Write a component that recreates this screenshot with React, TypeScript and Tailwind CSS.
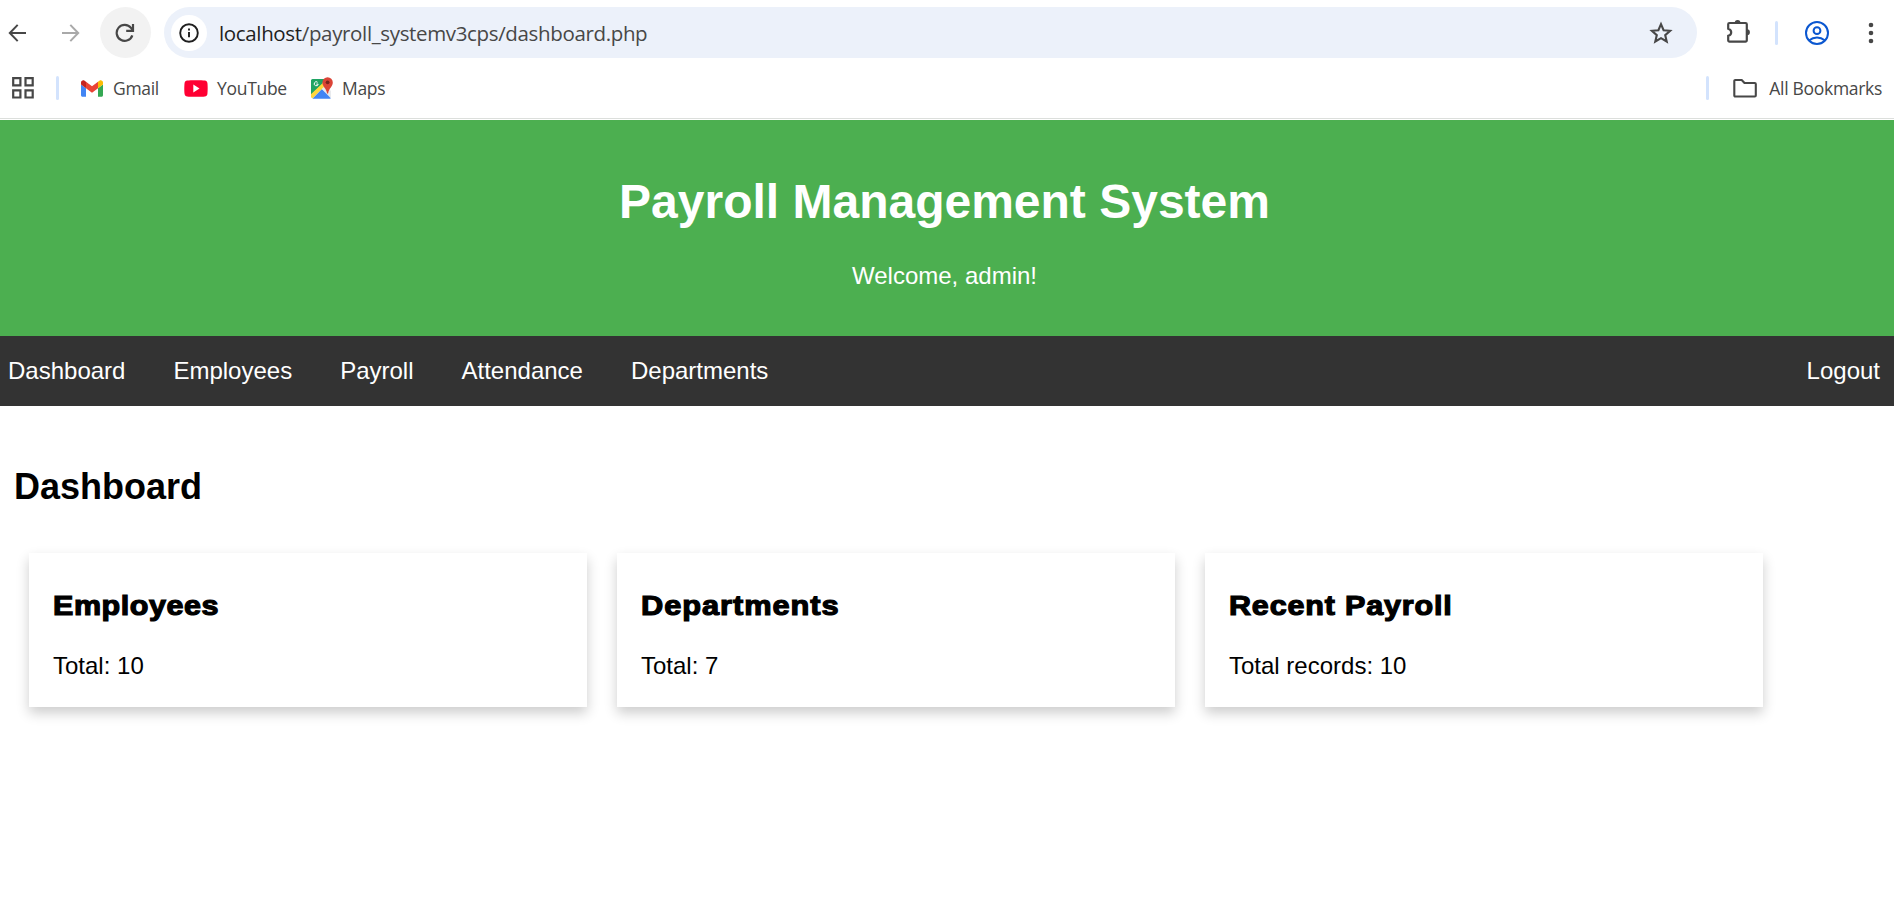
import React from "react";

const navLinks = ["Dashboard", "Employees", "Payroll", "Attendance", "Departments"];

const cards = [
  { title: "Employees", text: "Total: 10", stretch: "scale-x-[1.09] tracking-[0.5px]" },
  { title: "Departments", text: "Total: 7", stretch: "scale-x-[1.1] tracking-[0.85px]" },
  { title: "Recent Payroll", text: "Total records: 10", stretch: "scale-x-[1.09] tracking-[0.75px]" },
];

function Arrow({ className }: { className: string }) {
  return (
    <svg viewBox="0 0 18 18" className={"size-[18px] shrink-0 " + className} fill="none" stroke="currentColor" strokeWidth="2">
      <path d="M18 9H2.200M9.700 0.900 1.800 9l7.900 8.100" />
    </svg>
  );
}

function Reload() {
  return (
    <svg viewBox="0 0 20 20" className="size-5 text-[#474747]" fill="none" stroke="currentColor" strokeWidth="2.2">
      <path d="M17.3 12.3A8 8 0 1 1 16 4.9L17.6 7" />
      <path d="M18 1v6.8h-6.8" />
    </svg>
  );
}

function Info() {
  return (
    <svg viewBox="0 0 20 20" className="size-5 text-[#1f1f1f]" fill="none" stroke="currentColor" strokeWidth="1.9">
      <circle cx="10" cy="10" r="8.8" />
      <path d="M10 9v5.2M10 5.5v2" />
    </svg>
  );
}

function Star() {
  return (
    <svg viewBox="0 0 24 24" className="size-6 text-[#474747]" fill="none" stroke="currentColor" strokeWidth="2.1" strokeLinejoin="miter">
      <path d="M12 3.2l2.600 6 6.500.6-4.900 4.300 1.500 6.400-5.700-3.400-5.700 3.400 1.500-6.400L2.900 9.800l6.500-.6z" />
    </svg>
  );
}

function Puzzle() {
  return (
    <svg viewBox="0 0 26 26" className="h-[26px] w-[26px] text-[#474747]">
      <path
        d="M4.500 5h16a1.300 1.300 0 0 1 1.300 1.300v16a1.300 1.300 0 0 1-1.300 1.300h-16a1.300 1.300 0 0 1-1.300-1.300v-4.400c2-.5 3-1.800 3-3.600s-1-3.100-3-3.600V6.300A1.300 1.300 0 0 1 4.500 5z"
        fill="none"
        stroke="currentColor"
        strokeWidth="2.200"
      />
      <path d="M9.700 4.800a2.900 2.900 0 0 1 5.800 0zM22 11.300a2.900 2.900 0 0 1 0 5.800z" fill="currentColor" />
    </svg>
  );
}

function Profile() {
  return (
    <svg viewBox="0 0 24 24" className="size-6 text-[#0b57d0]" fill="none" stroke="currentColor" strokeWidth="2">
      <circle cx="12" cy="12" r="11" />
      <circle cx="12" cy="9.700" r="3.400" />
      <path d="M4.300 19.300c2.200-1.900 4.800-2.900 7.700-2.900s5.500 1 7.700 2.900" />
    </svg>
  );
}

function Dots() {
  return (
    <svg viewBox="0 0 6 22" className="h-[22px] w-1.5 text-[#474747]" fill="currentColor">
      <circle cx="3" cy="3" r="2.300" />
      <circle cx="3" cy="11" r="2.300" />
      <circle cx="3" cy="19" r="2.300" />
    </svg>
  );
}

function Apps() {
  return (
    <svg viewBox="0 0 22 22" className="size-[22px] text-[#474747]" fill="none" stroke="currentColor" strokeWidth="2.200">
      <path d="M1.200 1.200h7.200v7.200H1.200zM13.500 1.200h7.200v7.200h-7.200zM1.200 13.300h7.200v7.200H1.200zM13.500 13.300h7.200v7.200h-7.200z" />
    </svg>
  );
}

function Gmail() {
  return (
    <svg viewBox="52 42 88 66" className="h-[17px] w-[22px]">
      <path fill="#4285f4" d="M58 108h14V74L52 59v43c0 3.320 2.690 6 6 6" />
      <path fill="#34a853" d="M120 108h14c3.320 0 6-2.690 6-6V59l-20 15" />
      <path fill="#fbbc04" d="M120 48v26l20-15v-8c0-7.420-8.470-11.650-14.400-7.200" />
      <path fill="#ea4335" d="M72 74V48l24 18 24-18v26L96 92" />
      <path fill="#c5221f" d="M52 51v8l20 15V48l-5.600-4.200c-5.940-4.450-14.400-.22-14.400 7.200" />
    </svg>
  );
}

function YouTube() {
  return (
    <svg viewBox="0 0 24 17" className="h-[17px] w-6">
      <path fill="#ff0033" d="M3.200.5C6 .1 18 .1 20.800.5 22.300.7 23.200 1.700 23.400 3c.4 2.500.4 8.500 0 11-.2 1.300-1.100 2.300-2.600 2.500-2.800.4-14.800.4-17.600 0C1.700 16.300.8 15.300.6 14 .2 11.500.2 5.500.6 3 .8 1.700 1.700.7 3.200.5z" />
      <path fill="#fff" d="M9.300 4.500v8l6.200-4z" />
    </svg>
  );
}

function Maps() {
  return (
    <svg viewBox="0 0 22 22" className="size-[22px]">
      <path fill="#1fa463" d="M1.500 2H15v5L1.200 20.500a1.500 1.500 0 0 1-1.200-1.500V3.500A1.500 1.500 0 0 1 1.500 2z" />
      <path fill="#e8eaed" d="M11 11.200 14.500 8l5.500 6v6L19 21.500z" />
      <path fill="#4285f4" d="M1.500 21.500 10.800 12l9 9.300-.8.400H2z" />
      <path fill="#ffd73e" d="M0 16.800 12.500 4.500l2.700 3L1.700 21.300C.7 21.200 0 20.300 0 19.300z" />
      <path fill="#1fa463" d="M0 3.500h11.500v2.800L0 17z" />
      <path d="M6.600 5.300a2 2 0 1 0 .6 1.800H5.300" fill="none" stroke="#fff" strokeWidth="1" />
      <path fill="#db4437" d="M16.600.3a5.200 5.200 0 0 0-5.200 5.200c0 4.300 4.100 5.700 4.700 11.100h1c.6-5.400 4.700-6.800 4.700-11.100A5.200 5.200 0 0 0 16.600.3z" />
      <circle cx="16.600" cy="5.300" r="1.900" fill="#7b231d" />
    </svg>
  );
}

function Folder() {
  return (
    <svg viewBox="0 0 24 20" className="h-5 w-6 text-[#474747]" fill="none" stroke="currentColor" strokeWidth="2.100" strokeLinejoin="round">
      <path d="M1.300 17.500V3q0-1 1-1h6.400l2.800 3h10.300q1 0 1 1v11.500q0 1-1 1H2.300q-1 0-1-1z" />
    </svg>
  );
}

function Divider({ className }: { className: string }) {
  return <div className={"h-6 w-[3px] shrink-0 rounded-sm bg-[#d3e3fd] " + className} />;
}

function Toolbar() {
  return (
    <div className="flex h-[65px] items-center pl-2">
      <Arrow className="text-[#474747]" />
      <Arrow className="ml-9 rotate-180 text-[#a9a9a9]" />
      <div className="ml-5 flex size-[51px] shrink-0 items-center justify-center rounded-full bg-[#f2f2f2] pr-px">
        <Reload />
      </div>
      <div className="ml-[13px] flex h-[51px] w-[1533px] shrink-0 items-center rounded-full bg-[#ecf1fa] pr-6 pl-[7px]">
        <div className="flex size-9 items-center justify-center rounded-full bg-white">
          <Info />
        </div>
        <div className="ml-3 flex-1 text-[20.5px] leading-7 tracking-[-0.35px] text-[#474747]">
          <span className="text-[#1f1f1f]">localhost</span>/payroll_systemv3cps/dashboard.php
        </div>
        <Star />
      </div>
      <div className="ml-7 flex shrink-0 pb-[3px]">
        <Puzzle />
      </div>
      <Divider className="ml-6" />
      <div className="ml-[27px] shrink-0">
        <Profile />
      </div>
      <div className="ml-[39px] shrink-0">
        <Dots />
      </div>
    </div>
  );
}

function Bookmark({ icon, label, className }: { icon: React.ReactNode; label: string; className: string }) {
  return (
    <div className={"flex items-center " + className}>
      {icon}
      <span>{label}</span>
    </div>
  );
}

function BookmarksBar() {
  return (
    <div className="flex h-[53px] items-center justify-between pr-3 pb-[7px] pl-3 text-[17.5px] leading-6 tracking-[-0.3px] text-[#474747]">
      <div className="flex items-center">
        <Apps />
        <Divider className="ml-[22px]" />
        <Bookmark className="ml-[22px] w-[103px] gap-2.5" icon={<Gmail />} label="Gmail" />
        <Bookmark className="w-[127px] gap-[9px]" icon={<YouTube />} label="YouTube" />
        <Bookmark className="gap-[9px]" icon={<Maps />} label="Maps" />
      </div>
      <div className="flex items-center">
        <Divider className="mr-6" />
        <Bookmark className="gap-3" icon={<Folder />} label="All Bookmarks" />
      </div>
    </div>
  );
}

export default function App() {
  return (
    <div className="h-[915px] w-full overflow-hidden bg-white">
      <div className="h-[120px] font-['Open_Sans',sans-serif]">
        <Toolbar />
        <BookmarksBar />
        <div className="h-px bg-[#dcdfdc]" />
      </div>
      <div className="font-['Liberation_Sans',Arial,sans-serif] text-2xl/7 text-black">
        <header className="h-[216px] bg-[#4caf50] pt-[55px] pr-[5px] text-center text-white">
          <h1 className="text-5xl/[54px] font-bold">Payroll Management System</h1>
          <p className="mt-[33px]">Welcome, admin!</p>
        </header>
        <nav className="flex h-[70px] items-center justify-between bg-[#333333] pr-3.5 pl-2 text-white">
          <div className="flex gap-12">
            {navLinks.map((link) => (
              <a key={link}>{link}</a>
            ))}
          </div>
          <a>Logout</a>
        </nav>
        <main className="pt-[61px]">
          <h2 className="pl-3.5 text-4xl/10 font-bold">Dashboard</h2>
          <div className="mt-[46px] flex gap-[30px] pl-[29px]">
            {cards.map((card) => (
              <section key={card.title} className="h-[154px] w-[558px] bg-white px-6 pt-[37px] shadow-[0_6px_12px_0_rgba(0,0,0,0.2)]">
                <h3 className={"origin-left text-[28px]/8 font-bold [-webkit-text-stroke:1.2px_black] " + card.stretch}>{card.title}</h3>
                <p className="mt-[30px]">{card.text}</p>
              </section>
            ))}
          </div>
        </main>
      </div>
    </div>
  );
}
